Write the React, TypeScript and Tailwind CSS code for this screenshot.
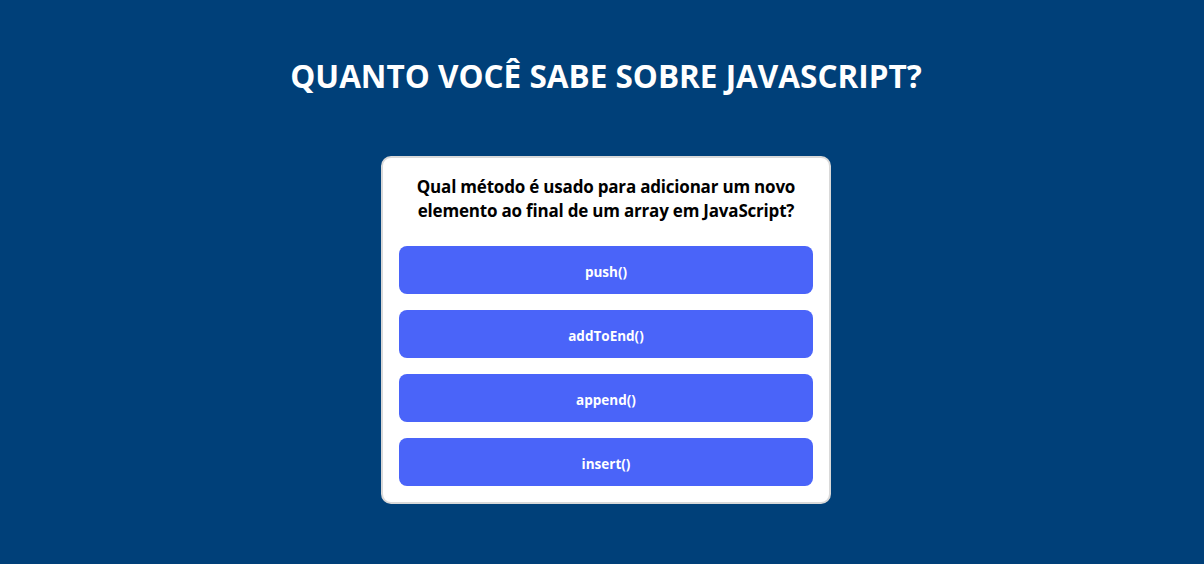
const options = ["push()", "addToEnd()", "append()", "insert()"];

export default function App() {
  return (
    <div
      className="min-h-[564px] bg-[#004079] flex flex-col items-center pt-[54px] pl-2"
      style={{ fontFamily: '"Open Sans", "Noto Sans", sans-serif' }}
    >
      <h1 className="text-[31.5px] font-bold text-white leading-[44px]">
        QUANTO VOCÊ SABE SOBRE JAVASCRIPT?
      </h1>
      <div className="mt-[58px] w-[450px] bg-white border-2 border-[#d9d9d9] rounded-[10px] p-4">
        <h2 className="text-[17px] font-bold text-black text-center leading-6 mt-px mb-[23px] tracking-[-0.2px]">
          Qual método é usado para adicionar um novo elemento ao final de um array em JavaScript?
        </h2>
        <div className="flex flex-col gap-4">
          {options.map((o) => (
            <button
              key={o}
              className="h-12 w-full rounded-[8px] bg-[#4a64f9] text-white text-[13.5px] font-bold pt-[5px]"
            >
              {o}
            </button>
          ))}
        </div>
      </div>
    </div>
  );
}
